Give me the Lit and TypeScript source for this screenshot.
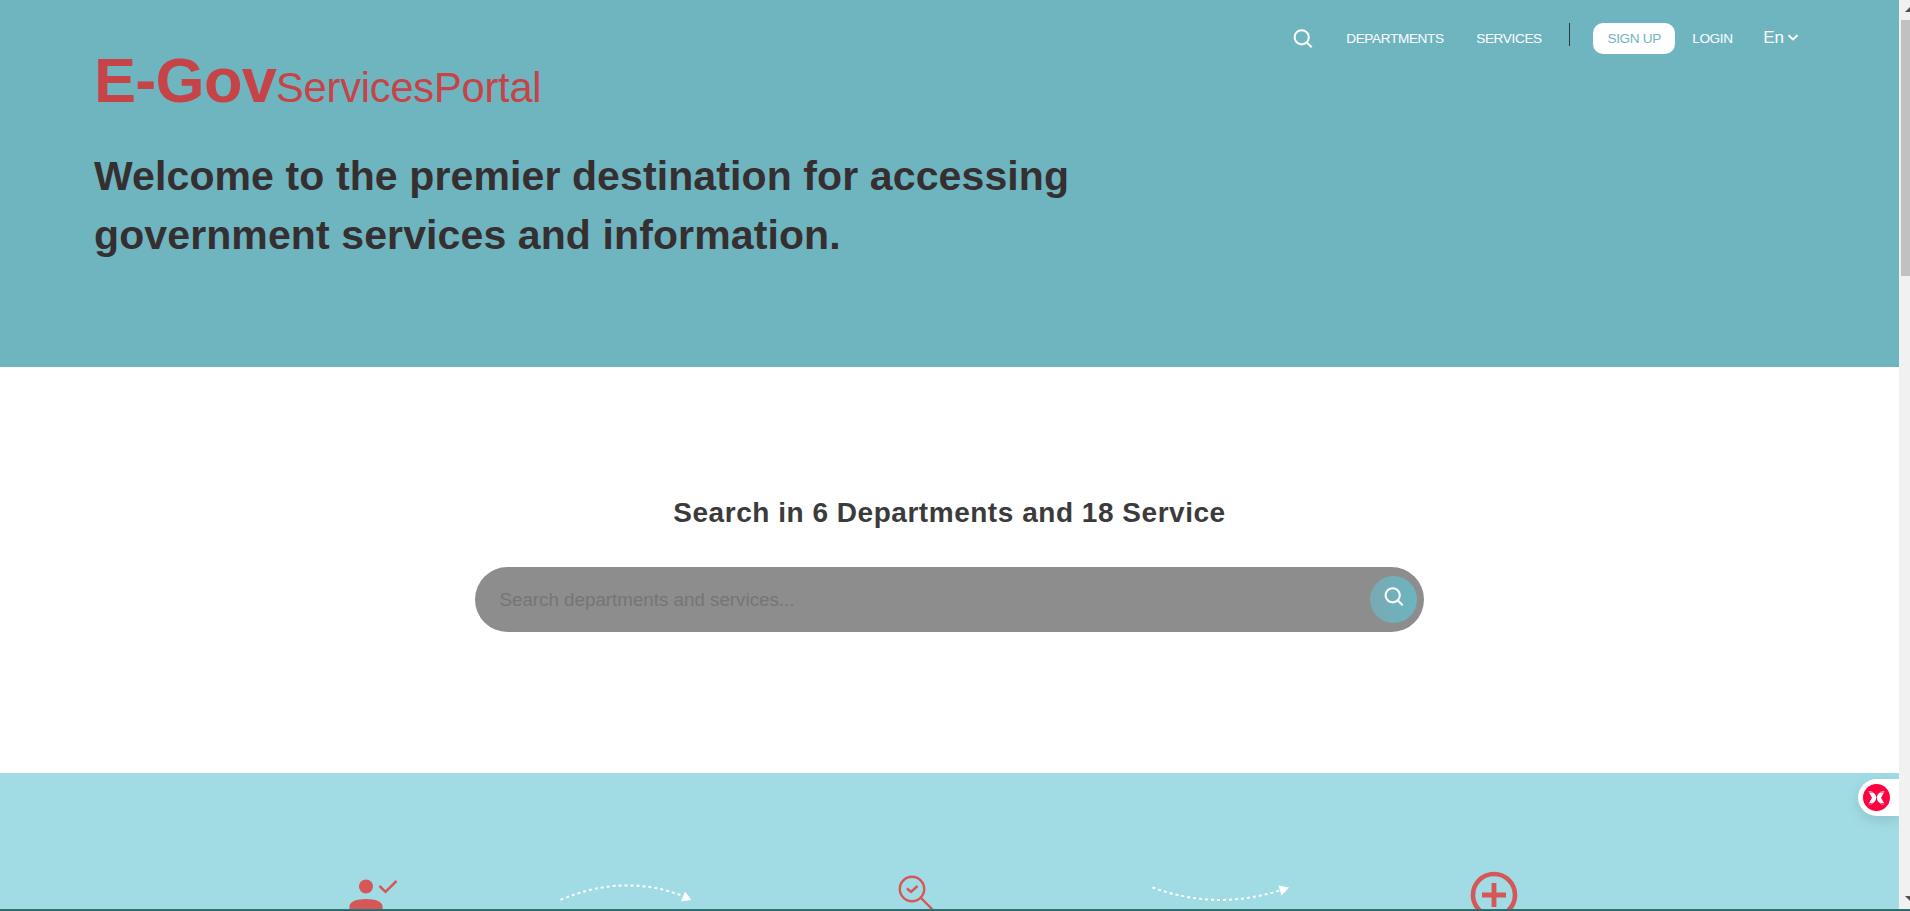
import { LitElement, html, css } from "lit";
import { customElement } from "lit/decorators.js";

const searchIcon = html`<svg viewBox="0 0 20 20" width="20" height="20" fill="none" stroke="currentColor" stroke-width="2.1">
  <circle cx="8.700" cy="8.300" r="7.100"></circle><path d="M13.500 13.200L18.700 18.300"></path></svg>`;

@customElement("gov-header")
class GovHeader extends LitElement {
  static styles = css`
    :host { display: flex; justify-content: space-between; height: 367px; box-sizing: border-box; background: #6eb5bf; padding: 0 99px 0 94px; font-family: "Liberation Sans", Arial, sans-serif; }
    .intro { width: 1050px; }
    .logo { display: flex; align-items: baseline; margin-top: 44px; height: 73px; line-height: 73px; color: #c64347; white-space: nowrap; }
    .logo strong { font-size: 63px; font-weight: 700; letter-spacing: -.7px; }
    .logo span { font-size: 41.6px; letter-spacing: -.2px; }
    h1 { margin: 30px 0 0; font-size: 41px; line-height: 59px; letter-spacing: .11px; color: #352f31; font-weight: 700; white-space: nowrap; }
    nav { display: flex; align-items: flex-start; color: #fff; font-size: 13.6px; letter-spacing: -.36px; line-height: 31px; padding-top: 23px; white-space: nowrap; }
    .find { height: 20px; margin: 6px 33px 0 0; }
    .find svg, .lang svg { display: block; }
    .departments { width: 130px; }
    .services { width: 93px; }
    .rule { width: 1px; height: 23px; background: #263b40; margin-right: 23px; }
    .signup { width: 82px; height: 31px; text-align: center; background: #fff; border-radius: 10px; color: #6eb5bf; margin-right: 17px; }
    .login { width: 71px; }
    .lang { display: flex; align-items: center; gap: 3px; font-size: 17px; letter-spacing: 0; line-height: 29px; }
    .lang svg { margin-right: 1px; }
  `;
  render() {
    return html`
      <div class="intro">
        <div class="logo"><strong>E-Gov</strong><span>ServicesPortal</span></div>
        <h1>Welcome to the premier destination for accessing<br>government services and information.</h1>
      </div>
      <nav>
        <span class="find">${searchIcon}</span>
        <span class="departments">DEPARTMENTS</span>
        <span class="services">SERVICES</span>
        <span class="rule"></span>
        <span class="signup">SIGN UP</span>
        <span class="login">LOGIN</span>
        <span class="lang">En<svg width="12" height="8" viewBox="0 0 12 8"><path d="M1.500 1.200L6 5.400L10.500 1.200" fill="none" stroke="#fff" stroke-width="2"></path></svg></span>
      </nav>`;
  }
}

@customElement("gov-search")
class GovSearch extends LitElement {
  static styles = css`
    :host { display: flex; flex-direction: column; align-items: center; height: 406px; background: #fff; font-family: "Liberation Sans", Arial, sans-serif; }
    h2 { margin: 129px 0 38px; font-size: 28px; line-height: 33px; letter-spacing: .53px; color: #3b3b3b; white-space: nowrap; }
    .bar { display: flex; align-items: center; box-sizing: border-box; width: 949px; height: 65px; border-radius: 33px; background: #8d8d8d; padding: 0 7px 0 24.5px; }
    input { flex: 1; min-width: 0; border: 0; outline: 0; padding: 0; background: none; font: 18.75px "Liberation Sans", Arial, sans-serif; }
    input::placeholder { color: #757575; opacity: 1; }
    button { width: 47px; height: 47px; border: 0; border-radius: 50%; padding: 0 0 6px 0; display: grid; place-items: center; color: #fff; background: linear-gradient(90deg, #78aab2, #6bb5c1); }
  `;
  render() {
    return html`<h2>Search in 6 Departments and 18 Service</h2>
      <div class="bar"><input placeholder="Search departments and services..."><button aria-label="Search">${searchIcon}</button></div>`;
  }
}

@customElement("gov-steps")
class GovSteps extends LitElement {
  static styles = css`
    :host { display: block; height: 136px; box-sizing: border-box; padding: 97px 0 0 349px; background: #a1dce4; overflow: hidden; }
    .row { display: grid; grid-template-columns: 211px 338px 254px 318px 50px; }
    svg { display: block; fill: none; }
  `;
  render() {
    return html`<div class="row">
      <svg width="52" height="39"><circle cx="17" cy="16.500" r="7" fill="#d65757"></circle><path d="M.5 45V36Q2 29 17 29T33.500 36V45Z" fill="#d65757"></path><path d="M30.500 16L36.500 21.800L47.500 11" stroke="#d65757" stroke-width="2.500"></path></svg>
      <svg width="134" height="39"><path d="M.5 29.800Q64 3 123 26" stroke="#fff" stroke-width="2" stroke-dasharray="3 3"></path><path d="M125 21.500L131.500 30L121 31.500Z" fill="#fff"></path></svg>
      <svg width="42" height="39"><g stroke="#d65757" stroke-width="2.400"><circle cx="14" cy="19" r="12.200"></circle><path d="M23 28L36 41M9 18.500L13 22L19.500 16"></path></g></svg>
      <svg width="140" height="39"><path d="M.5 17.500Q65 41 129 20" stroke="#fff" stroke-width="2" stroke-dasharray="3 3"></path><path d="M126.500 15.500L137 17.500L129.500 25.500Z" fill="#fff"></path></svg>
      <svg width="50" height="39"><circle cx="24" cy="25" r="21" stroke="#d65757" stroke-width="4.600"></circle><path d="M12 25H36M24 13V37" stroke="#d65757" stroke-width="4.800"></path></svg>
    </div>`;
  }
}

@customElement("app-root")
class AppRoot extends LitElement {
  static styles = css`
    :host { display: block; width: 1910px; height: 911px; overflow: hidden; position: relative; }
    .view { display: grid; grid-template-columns: 1899px 11px; height: 909px; }
    .scroll { background: #f1f1f1; overflow: hidden; display: flex; flex-direction: column; padding-left: 2px; }
    .scroll svg { display: block; flex: none; }
    .thumb { height: 256px; margin-bottom: 613px; background: #c1c1c1; }
    .edge { height: 2px; background: linear-gradient(#3d7478, #1c6464); }
    .badge { position: absolute; right: 11px; top: 779px; width: 41px; height: 37px; border-radius: 19px 0 0 19px; background: #fff; box-shadow: 0 4px 14px rgba(0,0,0,.12); clip-path: inset(-20px 0 -24px -20px); display: flex; align-items: center; padding-left: 5px; box-sizing: border-box; }
  `;
  render() {
    return html`<div class="view">
        <main><gov-header></gov-header><gov-search></gov-search><gov-steps></gov-steps></main>
        <div class="scroll">
          <svg width="9" height="20"><path d="M4 12L9 7L14 12Z" fill="#505050"></path></svg>
          <div class="thumb"></div>
          <svg width="9" height="20"><path d="M4 7L9 12L14 7Z" fill="#505050"></path></svg>
        </div>
      </div>
      <div class="edge"></div>
      <div class="badge"><svg width="27" height="27"><circle cx="13.500" cy="13.500" r="13.500" fill="#ff0040"></circle>
        <path d="M6 8.500H10Q12.500 9.500 13.300 13.500Q12.500 18 10 19H6L9 13.800ZM21 8.500H17Q14.500 9.500 13.700 13.500Q14.500 18 17 19H21L18 13.800Z" fill="#fff"></path><path d="M5.500 7.500Q8 7 10 8.500M21.500 7.500Q19 7 17 8.500M5.500 20Q8 20.500 10 19M21.500 20Q19 20.500 17 19" stroke="#ff8aa8" fill="none"></path></svg></div>`;
  }
}
